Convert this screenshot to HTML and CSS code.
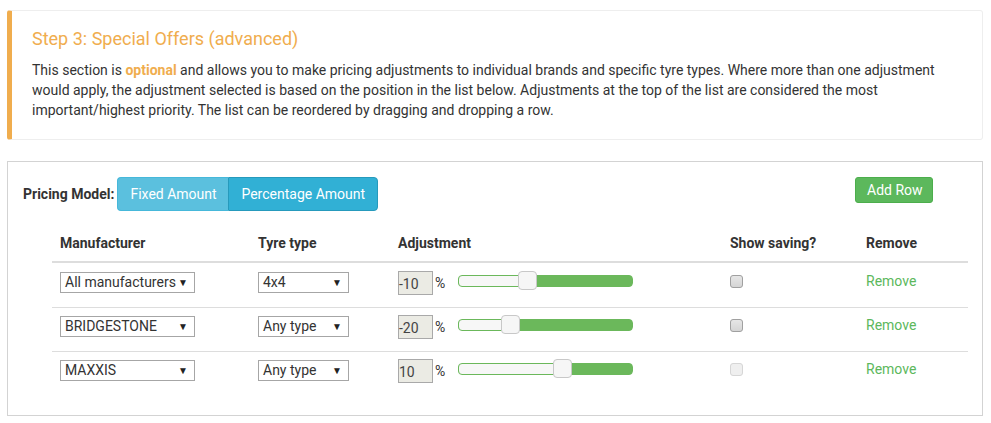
FILE: index.html
```html
<!DOCTYPE html>
<html>
<head>
<meta charset="utf-8">
<link rel="stylesheet" href="styles.css">
</head>
<body>
<div class="page">
  <div class="callout">
    <h4 class="callout-title">Step 3: Special Offers (advanced)</h4>
    <p class="callout-text">This section is <strong class="hl">optional</strong> and allows you to make pricing adjustments to individual brands and specific tyre types. Where more than one adjustment would apply, the adjustment selected is based on the position in the list below. Adjustments at the top of the list are considered the most important/highest priority. The list can be reordered by dragging and dropping a row.</p>
  </div>

  <div class="panel">
    <div class="toolbar">
      <div class="pricing">
        <span class="pricing-label">Pricing Model:</span>
        <div class="btn-group">
          <span class="btn btn-info">Fixed Amount</span>
          <span class="btn btn-info active">Percentage Amount</span>
        </div>
      </div>
      <span class="btn-add">Add Row</span>
    </div>

    <table class="grid">
      <colgroup>
        <col class="c-man"><col class="c-tyre"><col class="c-adj"><col class="c-show"><col class="c-rem">
      </colgroup>
      <thead>
        <tr><th>Manufacturer</th><th>Tyre type</th><th>Adjustment</th><th>Show saving?</th><th>Remove</th></tr>
      </thead>
      <tbody>
        <tr>
          <td><div class="sel sel-man"><span>All manufacturers</span><span class="arr">&#9660;</span></div></td>
          <td><div class="sel sel-tyre"><span>4x4</span><span class="arr">&#9660;</span></div></td>
          <td><div class="adj"><span class="num">-10</span><span class="pct">%</span><div class="slider" style="--v:40%"><span class="thumb"></span></div></div></td>
          <td><span class="chk"></span></td>
          <td><a class="rm">Remove</a></td>
        </tr>
        <tr>
          <td><div class="sel sel-man"><span>BRIDGESTONE</span><span class="arr">&#9660;</span></div></td>
          <td><div class="sel sel-tyre"><span>Any type</span><span class="arr">&#9660;</span></div></td>
          <td><div class="adj"><span class="num">-20</span><span class="pct">%</span><div class="slider" style="--v:30%"><span class="thumb"></span></div></div></td>
          <td><span class="chk"></span></td>
          <td><a class="rm">Remove</a></td>
        </tr>
        <tr>
          <td><div class="sel sel-man"><span>MAXXIS</span><span class="arr">&#9660;</span></div></td>
          <td><div class="sel sel-tyre"><span>Any type</span><span class="arr">&#9660;</span></div></td>
          <td><div class="adj"><span class="num">10</span><span class="pct">%</span><div class="slider" style="--v:60%"><span class="thumb"></span></div></div></td>
          <td><span class="chk chk-disabled"></span></td>
          <td><a class="rm">Remove</a></td>
        </tr>
      </tbody>
    </table>
  </div>
</div>
</body>
</html>
```

FILE: styles.css
```css
* { box-sizing: border-box; }
html, body { margin: 0; padding: 0; background: #fff; }
body {
  font-family: Roboto, "Liberation Sans", Arial, sans-serif;
  font-size: 14px;
  line-height: 20px;
  color: #333;
}
.page { padding: 10px 8px 0 7px; }

.callout {
  border: 1px solid #eee;
  border-left: 5px solid #f0ad4e;
  border-radius: 3px;
  padding: 18px 20px 19px 20px;
}
.callout-title {
  margin: 0 0 11px 0;
  font-size: 18px;
  font-weight: 400;
  line-height: 20px;
  color: #f0ad4e;
}
.callout-text { margin: 0; }
.hl { color: #f0ad4e; font-weight: 700; }

.panel {
  margin-top: 21px;
  border: 1px solid #d3d3d3;
  height: 255px;
  padding: 15px 15px 0 15px;
}
.toolbar {
  display: flex;
  justify-content: space-between;
  align-items: flex-start;
}
.pricing { display: flex; align-items: center; }
.pricing-label { font-weight: 700; margin-right: 3px; white-space: nowrap; }
.btn-group { display: flex; }
.btn {
  display: inline-block;
  height: 34px;
  line-height: 32px;
  padding: 0 12px;
  color: #fff;
  border: 1px solid #46b8da;
  white-space: nowrap;
}
.btn-info { background: #5bc0de; }
.btn-group .btn:first-child { border-radius: 4px 0 0 4px; border-right: none; width: 111px; }
.btn-group .btn:last-child { border-radius: 0 4px 4px 0; border-left: 1px solid #269abc; width: 150px; }
.btn-info.active { background: #31b0d5; border-color: #269abc; }
.btn-add {
  display: inline-block;
  height: 26px;
  line-height: 24px;
  padding: 0 11px 0 11px;
  margin-right: 34px;
  background: #5cb85c;
  border: 1px solid #4cae4c;
  border-radius: 3px;
  color: #fff;
  width: 78px;
  white-space: nowrap;
}

.grid {
  margin-top: 14px;
  margin-left: 29px;
  width: 916px;
  border-collapse: collapse;
  table-layout: fixed;
}
.c-man { width: 198px; }
.c-tyre { width: 140px; }
.c-adj { width: 332px; }
.c-show { width: 136px; }
.c-rem { width: 110px; }
.grid th {
  text-align: left;
  font-weight: 700;
  padding: 8px 8px;
  border-bottom: 2px solid #ddd;
  color: #333;
}
.grid td {
  height: 45px;
  padding: 8px 8px 0 8px;
  vertical-align: top;
}
.grid tbody tr + tr td { border-top: 1px solid #ddd; height: 44px; padding-top: 7px; }

.sel {
  margin-top: 1px;
  height: 21px;
  border: 1px solid #a6a6a6;
  background: #fff;
  display: flex;
  justify-content: space-between;
  align-items: center;
  padding: 0 6px 0 4px;
  color: #333;
  line-height: 19px;
  white-space: nowrap;
}
.sel-man { width: 135px; }
.sel-tyre { width: 91px; }
.arr { font-size: 10px; color: #222; }

.adj { display: flex; align-items: flex-start; }
.num {
  display: inline-block;
  width: 35px;
  height: 24px;
  line-height: 24px;
  border: 1px solid #a9a9a9;
  background: #ebebe4;
  padding-left: 0;
  color: #444;
}
.pct { margin-left: 2px; line-height: 24px; color: #333; }
.slider {
  position: relative;
  margin-left: 13px;
  margin-top: 4px;
  width: 175px;
  height: 12px;
  border: 1px solid #6bb85b;
  border-radius: 4px;
  background: linear-gradient(to right, #f7f7f7 0, #f7f7f7 var(--v), #6bb85b var(--v), #6bb85b 100%);
}
.thumb {
  position: absolute;
  top: -5px;
  left: calc(var(--v) - 10px);
  width: 19px;
  height: 19px;
  border: 1px solid #c8c8c8;
  border-radius: 4px;
  background: #f6f6f6;
}

.chk {
  display: block;
  margin-top: 4px;
  width: 13px;
  height: 13px;
  border: 1px solid #a0a0a0;
  border-radius: 3px;
  background: linear-gradient(#e6e6e6, #d5d5d5);
}
.chk-disabled { border-color: #d6d6d6; background: #efefef; }
.rm { color: #5cb85c; text-decoration: none; display: block; }
```
